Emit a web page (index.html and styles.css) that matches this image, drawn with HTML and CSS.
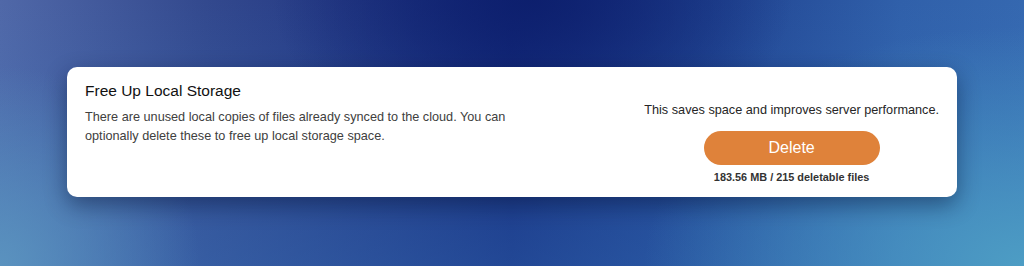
FILE: index.html
```html
<!DOCTYPE html>
<html lang="en">
<head>
  <meta charset="UTF-8" />
  <meta name="viewport" content="width=device-width, initial-scale=1.0"/>
  <title>Free Up Local Storage</title>
  <link rel="stylesheet" href="styles.css">
</head>
<body>
  <div class="card">
    <div class="info">
      <h2>Free Up Local Storage</h2>
      <p>There are unused local copies of files already synced to the cloud. You can optionally delete these to free up local storage space.</p>
    </div>

    <div class="action">
      <p class="hint">This saves space and improves server performance.</p>
      <button id="delete-btn">Delete</button>
      <div class="count">183.56 MB / 215 deletable files</div>
    </div>
  </div>
</body>
</html>
```

FILE: styles.css
```css
* {
  margin: 0; padding: 0; box-sizing: border-box;
  font-family: "Liberation Sans", Arial, sans-serif;
}

body {
  width: 1024px;
  height: 266px;
  display: flex;
  justify-content: center;
  align-items: center;
  overflow: hidden;
  background:
    radial-gradient(ellipse 260px 160px at 52% 0%, rgba(12, 30, 108, 0.9) 0%, rgba(12, 30, 108, 0) 100%),
    radial-gradient(ellipse 380px 240px at 100% 100%, #4d9dc4 0%, rgba(77, 157, 196, 0) 100%),
    radial-gradient(ellipse 200px 200px at 0% 100%, rgba(92, 150, 192, 0.9) 0%, rgba(92, 150, 192, 0) 100%),
    linear-gradient(to bottom, rgba(60, 130, 200, 0) 0%, rgba(60, 130, 200, 0.35) 100%),
    linear-gradient(to right, #5068a8 0%, #33498e 20%, #14287a 50%, #1f418f 68%, #3060aa 88%, #3568b0 100%);
}

.card {
  width: 890px;
  height: 130px;
  margin-top: -2px;
  background-color: #ffffff;
  border-radius: 10px;
  box-shadow: 0 8px 22px rgba(5, 15, 50, 0.45);
  padding: 14px 18px 13px 18px;
  display: flex;
  justify-content: space-between;
}

.info h2 {
  font-size: 15.5px;
  font-weight: 400;
  line-height: 20px;
  color: #111111;
}

.info p {
  max-width: 430px;
  margin-top: 7px;
  font-size: 12.7px;
  line-height: 19px;
  color: #404040;
}

.action {
  display: flex;
  flex-direction: column;
  align-items: center;
  padding-top: 20px;
}

.hint {
  font-size: 12.7px;
  line-height: 18px;
  color: #262626;
}

button {
  width: 176px;
  height: 34px;
  margin-top: 12px;
  background-color: #df823a;
  color: #ffffff;
  border: none;
  border-radius: 17px;
  font-size: 16px;
  cursor: pointer;
}

.count {
  margin-top: 5px;
  font-size: 10.9px;
  font-weight: 700;
  line-height: 14px;
  color: #333333;
}
```
